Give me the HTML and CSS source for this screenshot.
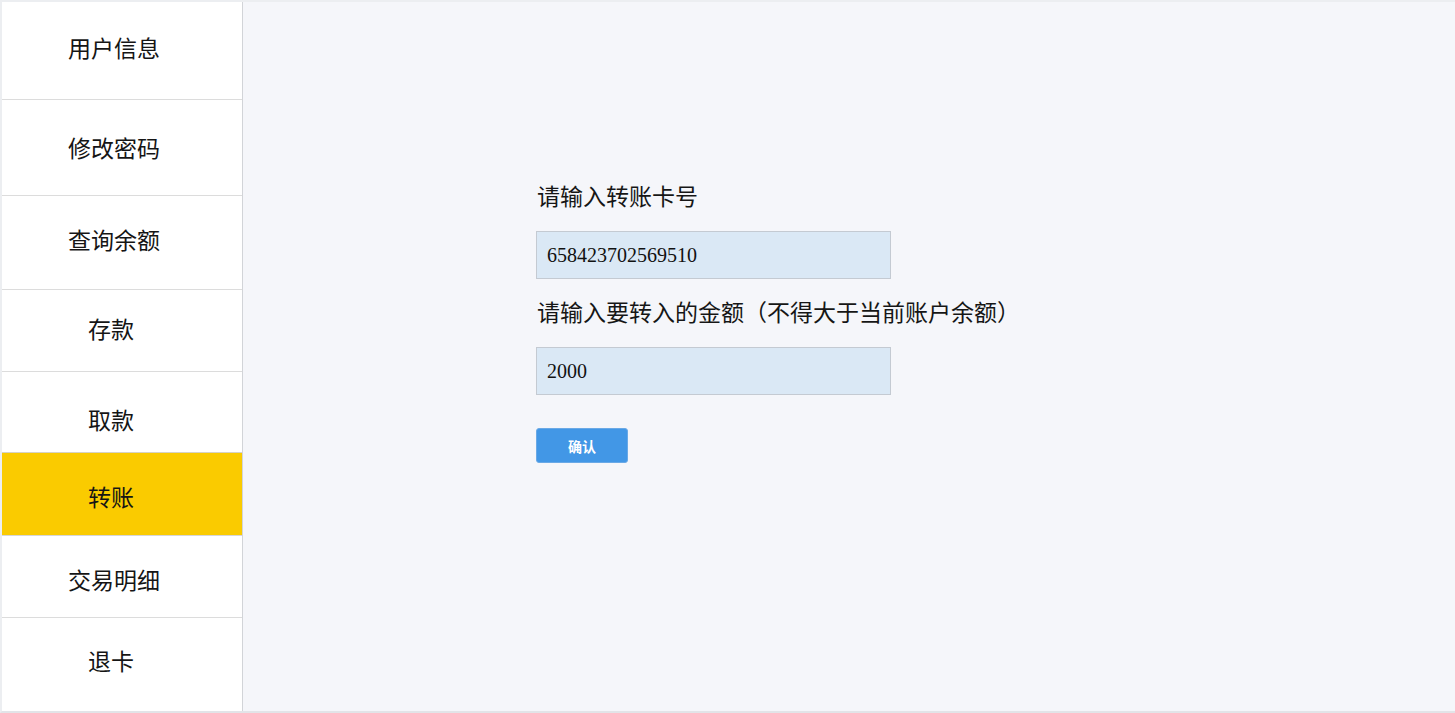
FILE: index.html
```html
<!DOCTYPE html>
<html lang="zh-CN">
<head>
<meta charset="utf-8">
<title>转账</title>
<link rel="stylesheet" href="styles.css">
</head>
<body>
<div class="app">
  <nav class="sidebar">
    <div class="item h1">用户信息</div>
    <div class="item h2">修改密码</div>
    <div class="item h3">查询余额</div>
    <div class="item h4 short">存款</div>
    <div class="item h5 short">取款</div>
    <div class="item h6 short active">转账</div>
    <div class="item h7">交易明细</div>
    <div class="item h8 short">退卡</div>
  </nav>
  <main class="main">
    <form class="form">
      <label class="label">请输入转账卡号</label>
      <input class="field" type="text" value="658423702569510">
      <label class="label">请输入要转入的金额（不得大于当前账户余额）</label>
      <input class="field" type="text" value="2000">
      <button class="btn" type="button">确认</button>
    </form>
  </main>
</div>
</body>
</html>
```

FILE: styles.css
```css
html, body {
  margin: 0;
  padding: 0;
  height: 100%;
}
body {
  font-family: "Liberation Serif", "Noto Sans CJK SC", serif;
  color: #111;
  background: #f5f6fa;
}
.app {
  display: flex;
  height: 713px;
  box-sizing: border-box;
  border-top: 2px solid #eceef1;
  border-left: 2px solid #eceef1;
  border-bottom: 2px solid #e2e4e8;
  background: #f5f6fa;
}
.sidebar {
  width: 240px;
  flex: none;
  display: flex;
  flex-direction: column;
  background: #fff;
  border-right: 1px solid #d2d4d8;
}
.item {
  box-sizing: border-box;
  display: flex;
  align-items: center;
  justify-content: center;
  padding-right: 16px;
  font-family: "Noto Sans CJK SC", sans-serif;
  font-size: 23px;
  color: #151515;
  border-bottom: 1px solid #dcdcdc;
  flex: none;
}
.item.short { padding-right: 22px; }
.h1 { height: 98px; padding-bottom: 8px; }
.h2 { height: 96px; padding-bottom: 2px; }
.h3 { height: 94px; padding-bottom: 8px; }
.h4 { height: 82px; padding-bottom: 6px; }
.h5 { height: 81px; padding-top: 14px; }
.h6 { height: 84px; padding-top: 4px; }
.h7 { height: 82px; padding-top: 4px; }
.h8 { flex: 1; border-bottom: none; padding-bottom: 10px; }
.item.active {
  background: #facb00;
  border-top: 1px solid #d6d2c4;
  border-bottom: 1px solid #d6d6d6;
  margin-top: -1px;
}
.main {
  flex: 1;
  background: #f5f6fa;
}
.form {
  display: flex;
  flex-direction: column;
  align-items: flex-start;
  margin: 179px 0 0 293px;
}
.label {
  font-family: "Noto Sans CJK SC", sans-serif;
  font-size: 23px;
  line-height: 28px;
  color: #161616;
  margin-bottom: 22px;
  padding-left: 1px;
}
.field {
  box-sizing: border-box;
  width: 355px;
  height: 48px;
  margin: 0 0 18px 0;
  padding: 0 10px;
  border: 1px solid #c4cad2;
  background: #dae8f5;
  font-family: "Liberation Serif", serif;
  font-size: 20px;
  color: #111;
  outline: none;
}
.btn {
  margin-top: 15px;
  width: 92px;
  height: 35px;
  border: 1px solid #6aa9e6;
  border-radius: 3px;
  background: #4297e6;
  color: #fff;
  font-family: "Noto Sans CJK SC", sans-serif;
  font-weight: bold;
  font-size: 14px;
  padding: 0;
}
```
